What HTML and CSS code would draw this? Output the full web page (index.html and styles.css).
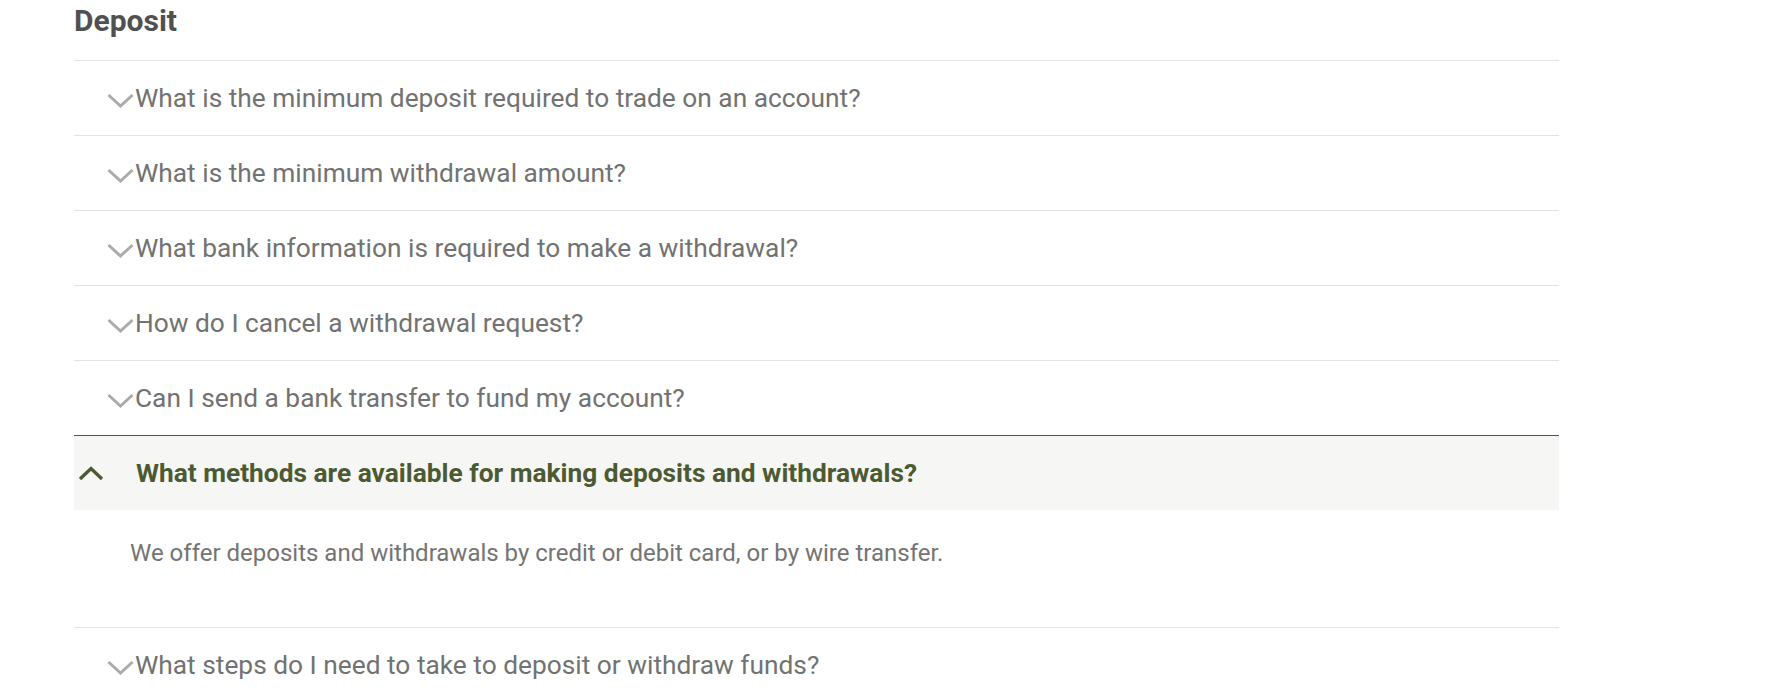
FILE: index.html
```html
<!DOCTYPE html>
<html lang="en">
<head>
<meta charset="utf-8">
<title>Deposit FAQ</title>
<link rel="stylesheet" href="styles.css">
</head>
<body>
<section class="faq">
  <h2 class="faq-title">Deposit</h2>
  <ul class="faq-list">
    <li class="faq-item">
      <div class="faq-q">
        <svg class="chev" width="27" height="15" viewBox="0 0 27 15"><polyline points="1.5,2 13.5,13 25.5,2" fill="none" stroke="currentColor" stroke-width="3"/></svg>
        <span>What is the minimum deposit required to trade on an account?</span>
      </div>
    </li>
    <li class="faq-item">
      <div class="faq-q">
        <svg class="chev" width="27" height="15" viewBox="0 0 27 15"><polyline points="1.5,2 13.5,13 25.5,2" fill="none" stroke="currentColor" stroke-width="3"/></svg>
        <span>What is the minimum withdrawal amount?</span>
      </div>
    </li>
    <li class="faq-item">
      <div class="faq-q">
        <svg class="chev" width="27" height="15" viewBox="0 0 27 15"><polyline points="1.5,2 13.5,13 25.5,2" fill="none" stroke="currentColor" stroke-width="3"/></svg>
        <span>What bank information is required to make a withdrawal?</span>
      </div>
    </li>
    <li class="faq-item">
      <div class="faq-q">
        <svg class="chev" width="27" height="15" viewBox="0 0 27 15"><polyline points="1.5,2 13.5,13 25.5,2" fill="none" stroke="currentColor" stroke-width="3"/></svg>
        <span>How do I cancel a withdrawal request?</span>
      </div>
    </li>
    <li class="faq-item">
      <div class="faq-q">
        <svg class="chev" width="27" height="15" viewBox="0 0 27 15"><polyline points="1.5,2 13.5,13 25.5,2" fill="none" stroke="currentColor" stroke-width="3"/></svg>
        <span>Can I send a bank transfer to fund my account?</span>
      </div>
    </li>
    <li class="faq-item is-open">
      <div class="faq-q">
        <svg class="chev-up" width="26" height="15" viewBox="0 0 26 15"><polyline points="2,13 13,2.5 24,13" fill="none" stroke="currentColor" stroke-width="3.4"/></svg>
        <span>What methods are available for making deposits and withdrawals?</span>
      </div>
      <div class="faq-a">We offer deposits and withdrawals by credit or debit card, or by wire transfer.</div>
    </li>
    <li class="faq-item">
      <div class="faq-q">
        <svg class="chev" width="27" height="15" viewBox="0 0 27 15"><polyline points="1.5,2 13.5,13 25.5,2" fill="none" stroke="currentColor" stroke-width="3"/></svg>
        <span>What steps do I need to take to deposit or withdraw funds?</span>
      </div>
    </li>
  </ul>
</section>
</body>
</html>
```
FILE: styles.css
```css
* { box-sizing: border-box; }
html, body { margin: 0; padding: 0; background: #fff; }
body { font-family: Roboto, "Liberation Sans", Arial, sans-serif; }

.faq {
  margin-left: 74px;
  width: 1485px;
}

.faq-title {
  margin: 0;
  height: 61px;
  padding-top: 2px;
  font-size: 30px;
  font-weight: 700;
  line-height: 38px;
  color: #505050;
  border-bottom: 1px solid #e3e3e3;
}

.faq-list {
  list-style: none;
  margin: 0;
  padding: 0;
}

.faq-item {
  border-bottom: 1px solid #e3e3e3;
}

.faq-q {
  display: flex;
  align-items: center;
  gap: 1px;
  height: 74px;
  padding-left: 33px;
  font-size: 26.3px;
  color: #727272;
}

.chev {
  color: #ababab;
  margin-top: 5px;
}

.faq-item:nth-child(5) { border-bottom: 1px solid #555; }

.is-open .faq-q {
  background: #f6f6f5;
  padding-left: 4px;
  gap: 32px;
  font-weight: 700;
  color: #4c5a32;
}

.chev-up { color: #4c5a32; }

.faq-a {
  height: 117px;
  padding: 29px 0 0 56px;
  font-size: 24px;
  color: #747474;
}
```
